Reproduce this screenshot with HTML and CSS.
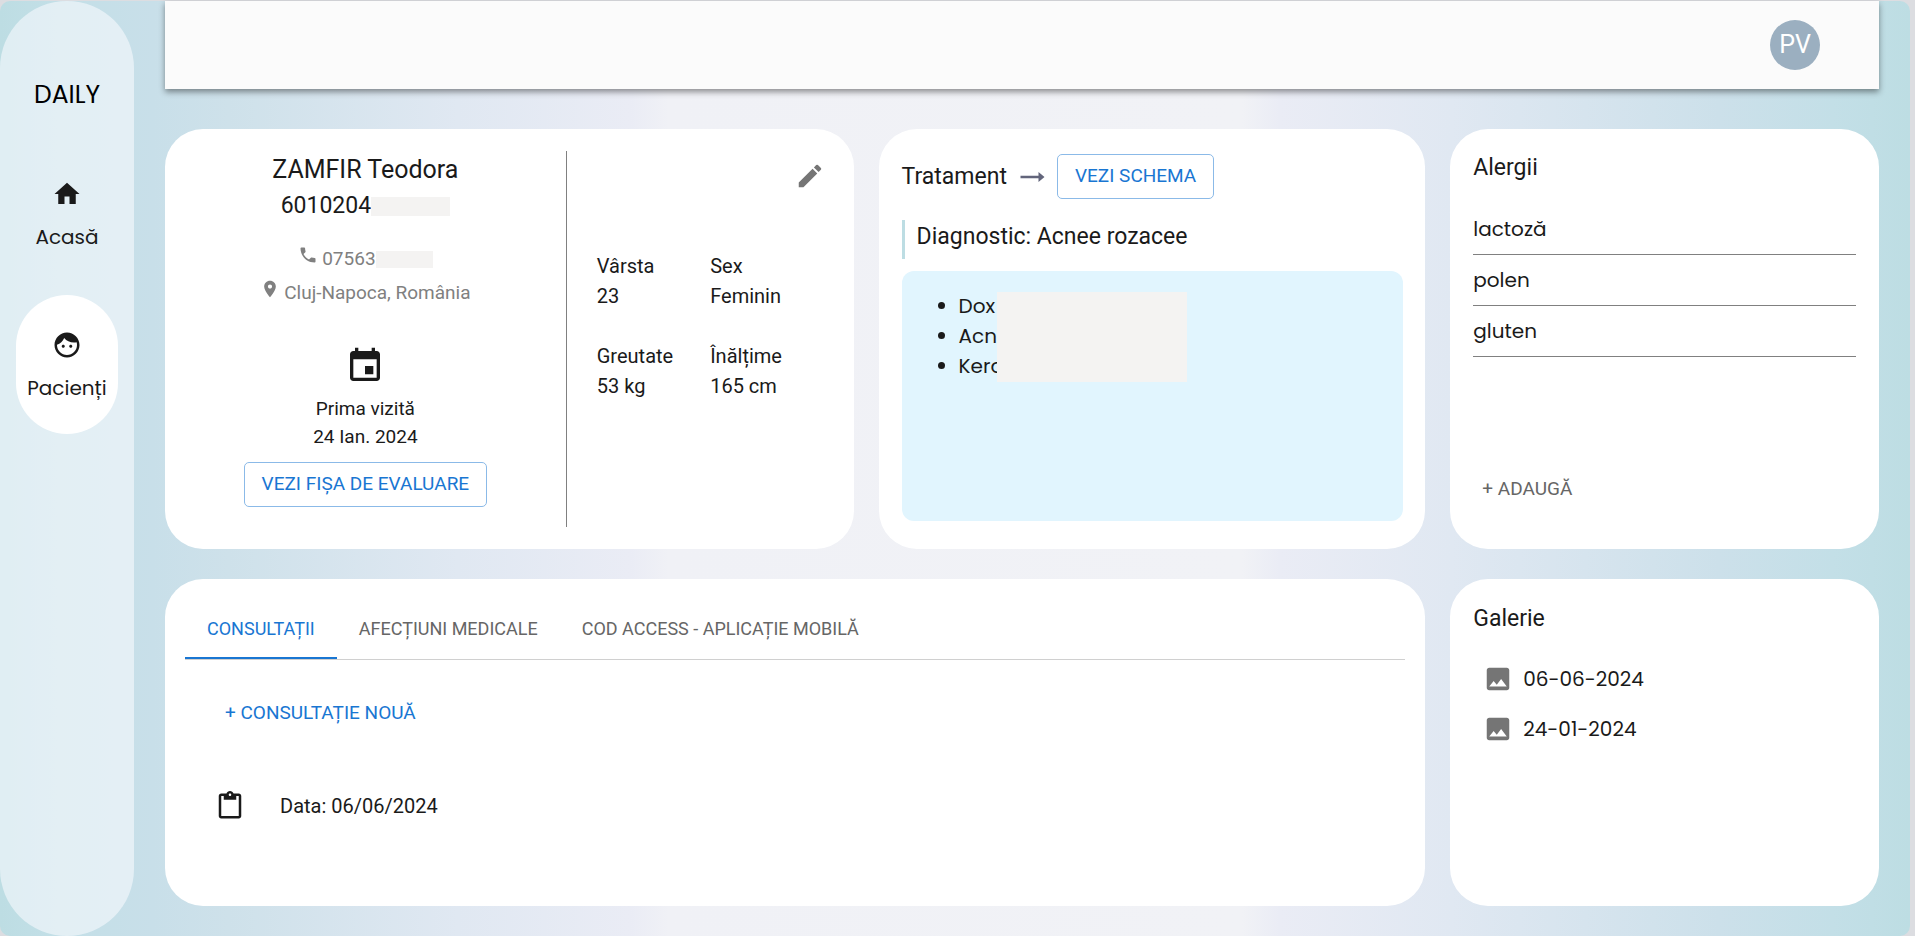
FILE: index.html
```html
<!DOCTYPE html>
<html lang="ro">
<head>
<meta charset="utf-8">
<meta name="viewport" content="width=device-width, initial-scale=1">
<title>Daily - Pacienți</title>
<link rel="stylesheet" href="styles.css">
</head>
<body>
<div class="app">
  <aside class="sidebar">
    <div class="brand">DAILY</div>
    <nav class="nav">
      <a class="nav-item" href="#acasa">
        <svg class="icon" viewBox="0 0 24 24"><path d="M10 20v-6h4v6h5v-8h3L12 3 2 12h3v8z"/></svg>
        <span>Acasă</span>
      </a>
      <a class="nav-item nav-item-active" href="#pacienti">
        <svg class="icon" viewBox="0 0 24 24"><path d="M10.25 13c0 .69-.56 1.25-1.25 1.25S7.75 13.69 7.750 13s.56-1.250 1.250-1.250 1.250.56 1.250 1.250zM15 11.750c-.69 0-1.250.56-1.250 1.250s.56 1.250 1.250 1.250 1.250-.56 1.250-1.250-.56-1.250-1.250-1.250zm7 .25c0 5.520-4.480 10-10 10S2 17.520 2 12 6.480 2 12 2s10 4.480 10 10zm-2 0c0-.78-.12-1.530-.33-2.240-.7.150-1.420.24-2.170.24-3.130 0-5.920-1.440-7.760-3.690C8.690 8.870 6.600 10.880 4 11.860c.01.04 0 .09 0 .14 0 4.410 3.590 8 8 8s8-3.590 8-8z"/></svg>
        <span>Pacienți</span>
      </a>
    </nav>
  </aside>

  <div class="content">
    <header class="topbar">
      <button class="avatar" type="button">PV</button>
    </header>

    <main class="grid">
      <section class="card patient">
        <div class="identity">
          <h1 class="name">ZAMFIR Teodora</h1>
          <div class="cnp">6010204<span class="redacted redacted-cnp"></span></div>
          <div class="contact phone">
            <svg class="icon-small" viewBox="0 0 24 24"><path d="M6.620 10.790c1.440 2.830 3.760 5.140 6.590 6.590l2.200-2.200c.27-.27.67-.36 1.020-.24 1.120.37 2.330.57 3.570.57.550 0 1 .45 1 1V20c0 .55-.45 1-1 1-9.390 0-17-7.610-17-17 0-.55.45-1 1-1h3.500c.55 0 1 .45 1 1 0 1.250.2 2.450.57 3.570.11.350.030.740-.25 1.020l-2.200 2.200z"/></svg>
            <span class="phone-number">07563<span class="redacted redacted-phone"></span></span>
          </div>
          <div class="contact">
            <svg class="icon-small" viewBox="0 0 24 24"><path d="M12 2C8.130 2 5 5.130 5 9c0 5.250 7 13 7 13s7-7.750 7-13c0-3.870-3.130-7-7-7zm0 9.500c-1.380 0-2.500-1.120-2.500-2.500s1.120-2.500 2.500-2.500 2.500 1.120 2.500 2.500-1.120 2.500-2.500 2.500z"/></svg>
            <span>Cluj-Napoca, România</span>
          </div>
          <svg class="icon-large" viewBox="0 0 24 24"><path d="M17 12h-5v5h5v-5zM16 1v2H8V1H6v2H5c-1.110 0-1.990.9-1.990 2L3 19c0 1.100.89 2 2 2h14c1.100 0 2-.9 2-2V5c0-1.100-.9-2-2-2h-1V1h-2zm3 18H5V8h14v11z"/></svg>
          <div class="visit">Prima vizită<br>24 Ian. 2024</div>
          <button class="btn" type="button">VEZI FIȘA DE EVALUARE</button>
        </div>
        <div class="vitals">
          <button class="edit" type="button" aria-label="Editează">
            <svg class="icon" viewBox="0 0 24 24"><path d="M3 17.250V21h3.750L17.810 9.940l-3.750-3.750L3 17.250zM20.710 7.040c.39-.39.39-1.020 0-1.410l-2.340-2.340a.9959.9959 0 0 0-1.410 0l-1.830 1.830 3.750 3.750 1.830-1.830z"/></svg>
          </button>
          <dl class="facts">
            <div><dt>Vârsta</dt><dd>23</dd></div>
            <div><dt>Sex</dt><dd>Feminin</dd></div>
            <div><dt>Greutate</dt><dd>53 kg</dd></div>
            <div><dt>Înălțime</dt><dd>165 cm</dd></div>
          </dl>
        </div>
      </section>

      <section class="card treatment">
        <div class="treatment-head">
          <h2 class="title">Tratament</h2>
          <svg class="arrow" viewBox="0 0 24 12"><path d="M0 4.800h18V1l6 5-6 5V7.200H0z"/></svg>
          <button class="btn" type="button">VEZI SCHEMA</button>
        </div>
        <h2 class="title diagnosis">Diagnostic: Acnee rozacee</h2>
        <div class="scheme">
          <ul class="drugs">
            <li>Dox</li>
            <li>Acn</li>
            <li>Kera</li>
          </ul>
          <div class="redacted redacted-drugs"></div>
        </div>
      </section>

      <section class="card allergies">
        <h2 class="title">Alergii</h2>
        <ul class="allergy-list">
          <li>lactoză</li>
          <li>polen</li>
          <li>gluten</li>
        </ul>
        <button class="btn-text btn-muted" type="button">+ ADAUGĂ</button>
      </section>

      <section class="card records">
        <div class="tabs" role="tablist">
          <button class="tab tab-active" role="tab" aria-selected="true" type="button">CONSULTAȚII</button>
          <button class="tab" role="tab" aria-selected="false" type="button">AFECȚIUNI MEDICALE</button>
          <button class="tab" role="tab" aria-selected="false" type="button">COD ACCESS - APLICAȚIE MOBILĂ</button>
        </div>
        <button class="btn-text add-record" type="button">+ CONSULTAȚIE NOUĂ</button>
        <a class="record" href="#consultatie">
          <svg class="icon" viewBox="0 0 24 24"><path d="M19 2h-4.180C14.400.84 13.300 0 12 0c-1.300 0-2.400.84-2.820 2H5c-1.100 0-2 .9-2 2v16c0 1.100.9 2 2 2h14c1.100 0 2-.9 2-2V4c0-1.100-.9-2-2-2zm-7 0c.55 0 1 .45 1 1s-.45 1-1 1-1-.45-1-1 .45-1 1-1zm7 18H5V4h2v3h10V4h2v16z"/></svg>
          <span>Data: 06/06/2024</span>
        </a>
      </section>

      <section class="card gallery">
        <h2 class="title">Galerie</h2>
        <ul class="gallery-list">
          <li><a class="photo" href="#06-06-2024"><svg class="icon" viewBox="0 0 24 24"><path d="M21 19V5c0-1.100-.9-2-2-2H5c-1.100 0-2 .9-2 2v14c0 1.100.9 2 2 2h14c1.100 0 2-.9 2-2zM8.500 13.500l2.500 3.010L14.500 12l4.500 6H5l3.500-4.500z"/></svg><span>06-06-2024</span></a></li>
          <li><a class="photo" href="#24-01-2024"><svg class="icon" viewBox="0 0 24 24"><path d="M21 19V5c0-1.100-.9-2-2-2H5c-1.100 0-2 .9-2 2v14c0 1.100.9 2 2 2h14c1.100 0 2-.9 2-2zM8.500 13.500l2.500 3.010L14.500 12l4.500 6H5l3.500-4.500z"/></svg><span>24-01-2024</span></a></li>
        </ul>
      </section>
    </main>
  </div>
</div>
</body>
</html>
```
FILE: styles.css
```css
* { box-sizing: border-box; }

body {
  margin: 0;
  padding: 1px 5px 0 0;
  min-height: 100vh;
  display: flex;
  background: #dcdde1;
  color: #1a1a1a;
  font-family: Roboto, "Liberation Sans", sans-serif;
  font-size: 20px;
  line-height: 30px;
}

h1, h2, ul, dl, dd { margin: 0; padding: 0; font-weight: 400; }
ul { list-style: none; }
button { font: inherit; color: inherit; background: none; border: 0; padding: 0; cursor: pointer; }
a { color: inherit; text-decoration: none; }
svg { display: block; fill: currentColor; flex: none; }

.app {
  flex: 1;
  display: flex;
  gap: 31px;
  padding-right: 31px;
  border-radius: 10px;
  background: linear-gradient(90deg, #bddde3 0%, #c3dfe7 3%, #c8dfe9 8%, #cee1ea 12%, #e0e8f2 24%, #eaecf5 33%, #f0f1f6 35%, #f1f2f6 65%, #eaecf5 67%, #e0e8f2 76%, #cce0ea 90%, #c3dfe7 96%, #bddde3 100%);
}

.sidebar {
  flex: none;
  width: 134px;
  padding: 79px 16px 0;
  border-radius: 67px;
  background: rgba(252, 252, 255, 0.56);
  font-family: Poppins, Inter, sans-serif;
  text-align: center;
}
.brand { color: #000; font-size: 25px; }
.nav { display: flex; flex-direction: column; gap: 12px; margin-top: 34px; }
.nav-item {
  display: flex;
  flex-direction: column;
  align-items: center;
  gap: 13px;
  padding: 35px 0 31px;
  border-radius: 51px;
}
.nav-item-active { background: #fff; }

.icon { width: 30px; height: 30px; }
.icon-small { width: 20px; height: 20px; }
.icon-large { width: 40px; height: 40px; }

.content { flex: 1; min-width: 0; display: flex; flex-direction: column; gap: 40px; }

.topbar {
  display: flex;
  justify-content: flex-end;
  align-items: center;
  height: 88px;
  padding-right: 59px;
  background: #fbfbfb;
  box-shadow: 0 3px 6px rgba(0, 0, 0, 0.42);
}
.avatar {
  width: 50px;
  height: 50px;
  border-radius: 50%;
  background: #9bafc0;
  color: #fff;
  font-size: 25px;
}

.grid {
  flex: 1;
  display: grid;
  grid-template-columns: 689fr 547fr 429fr;
  grid-template-rows: 420px 1fr;
  gap: 30px 25px;
  padding-bottom: 30px;
}
.card { min-width: 0; border-radius: 38px; background: #fff; padding: 22px; }
.title { font-size: 23px; line-height: 30px; }
.redacted { background: #f4f3f2; }

.patient { display: grid; grid-template-columns: 380fr 265fr; }
.identity {
  display: flex;
  flex-direction: column;
  align-items: center;
  padding: 1px 22px 0 0;
  border-right: 1px solid #808080;
}
.name { font-size: 25px; line-height: 36px; }
.cnp { display: flex; align-items: center; font-size: 23px; line-height: 36px; }
.redacted-cnp { width: 79px; height: 19px; }
.contact { display: flex; gap: 4px; color: #808080; line-height: 34px; font-size: 19px; }
.contact .icon-small { margin-top: 3px; }
.phone { margin-top: 18px; }
.phone-number { display: flex; align-items: center; }
.redacted-phone { width: 57px; height: 17px; }
.icon-large { margin: 36px 0 9px; }
.visit { font-size: 19px; line-height: 28px; text-align: center; }

.btn {
  height: 45px;
  padding: 0 17px 1px;
  border: 1px solid #8bbae8;
  border-radius: 5px;
  color: #1976d2;
  font-size: 19px;
  line-height: 30px;
}
.identity .btn { margin-top: 11px; }

.vitals { padding-left: 30px; }
.edit { display: block; margin: 10px 7px 0 auto; color: #757575; }
.facts {
  display: grid;
  grid-template-columns: max-content max-content;
  gap: 30px 37px;
  margin-top: 60px;
}

.treatment { display: flex; flex-direction: column; padding: 25px 22px 28px 23px; }
.treatment-head { display: flex; align-items: center; }
.arrow { width: 25px; height: 12px; margin: 0 12px 0 13px; color: #62657b; }
.diagnosis {
  margin-top: 21px;
  padding: 2px 0 7px 12px;
  border-left: 3px solid #bddde3;
}
.scheme {
  position: relative;
  flex: 1;
  margin-top: 12px;
  padding: 20px 57px;
  border-radius: 12px;
  background: #e1f5fe;
  font-family: Poppins, Inter, sans-serif;
}
.drugs { list-style: disc; }
.redacted-drugs { position: absolute; left: 95px; top: 21px; width: 190px; height: 90px; }

.allergies { display: flex; flex-direction: column; align-items: flex-start; padding: 24px 23px 45px; }
.allergy-list { align-self: stretch; margin-top: 21px; font-family: Poppins, Inter, sans-serif; }
.allergy-list li { padding: 10px 0; border-bottom: 1px solid #808080; }
.btn-text { color: #1976d2; font-size: 19px; line-height: 30px; }
.btn-muted { margin: auto 0 0 9px; color: #666; }

.records { grid-column: span 2; padding: 20px; }
.tabs { display: flex; border-bottom: 1px solid #d0d0d0; }
.tab { height: 60px; padding: 0 22px; color: #666; font-size: 18px; }
.tab-active { color: #1976d2; box-shadow: inset 0 -2px #1976d2; }
.add-record { display: block; margin: 38px 0 0 40px; }
.record { display: flex; align-items: center; gap: 35px; margin: 63px 0 0 30px; }

.gallery { padding: 25px 23px; }
.gallery-list { display: flex; flex-direction: column; gap: 20px; margin-top: 30px; }
.photo { display: flex; align-items: center; gap: 10px; padding-left: 10px; font-family: Poppins, Inter, sans-serif; }
.photo .icon { color: #757575; }
```
